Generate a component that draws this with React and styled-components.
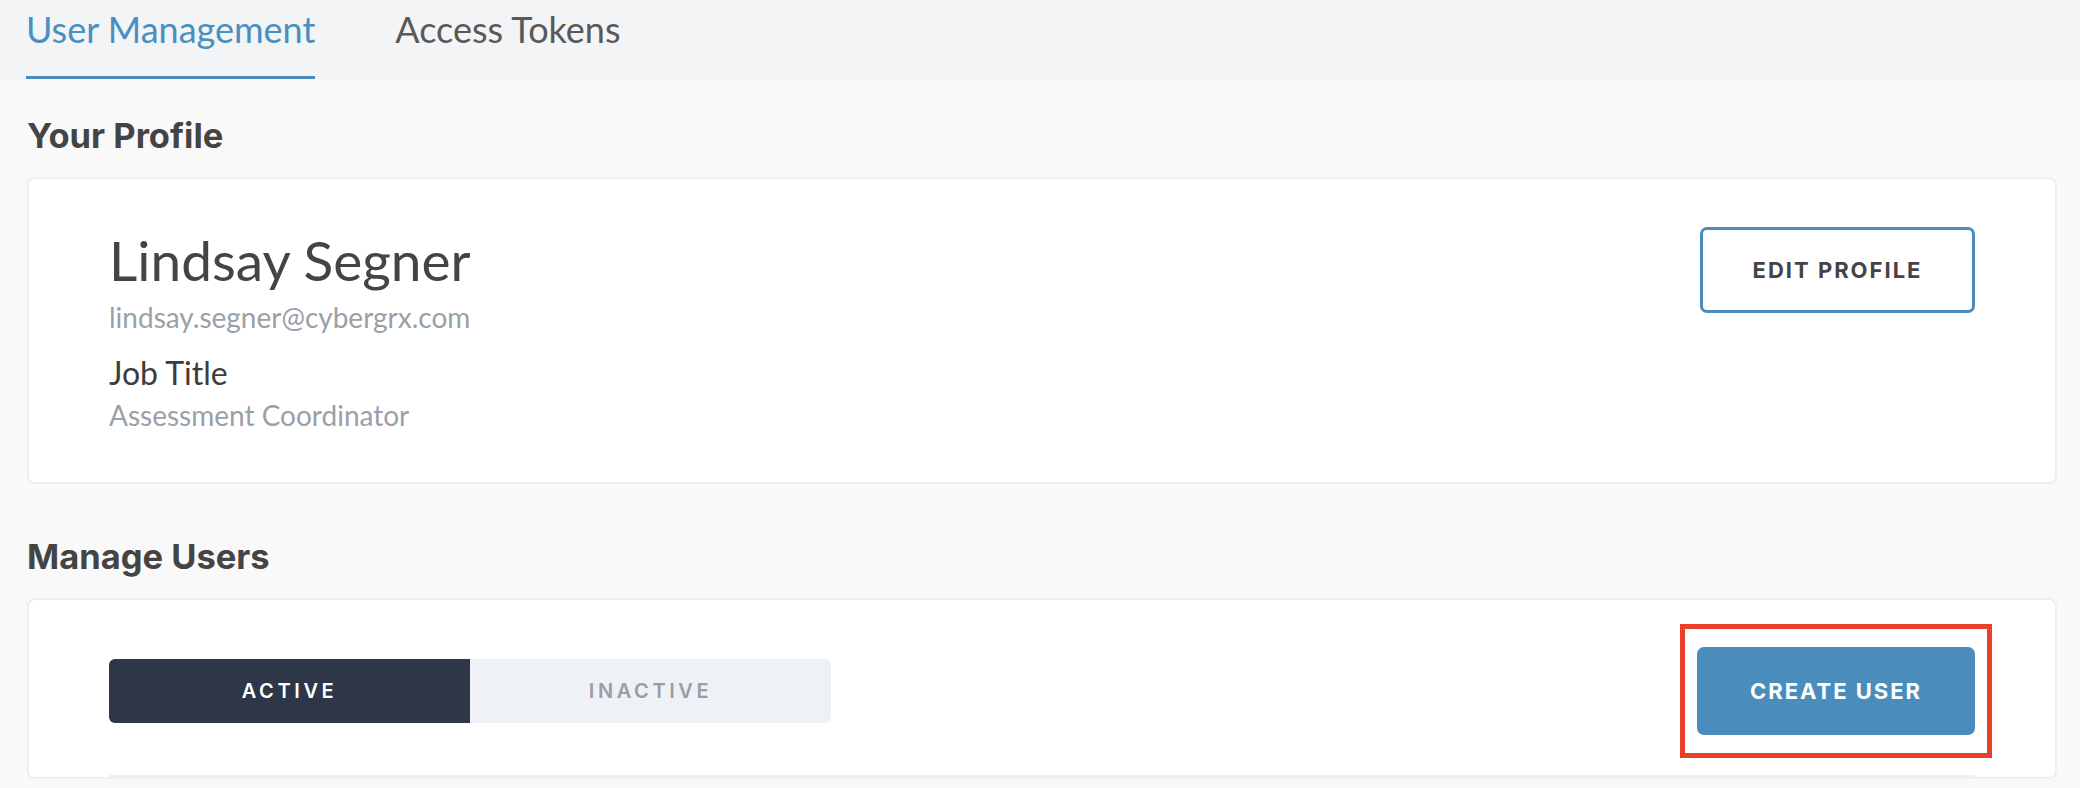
import React, { useState } from "react";
import styled, { createGlobalStyle } from "styled-components";

const GlobalStyle = createGlobalStyle`
  body {
    margin: 0;
    background: #f9f9fa;
    font-family: Lato, "Open Sans", sans-serif;
    color: #404040;
  }
  * {
    box-sizing: border-box;
  }
`;

const TabBar = styled.div`
  height: 80px;
  background: #f3f4f6;
  display: flex;
  gap: 80px;
  padding-left: 26px;
`;

const Tab = styled.div`
  height: 79px;
  padding-top: 8px;
  font-size: 36px;
  line-height: 43px;
  color: ${({ active }) => (active ? "#4a8fc1" : "#595959")};
  border-bottom: 3px solid ${({ active }) => (active ? "#4a8dbd" : "transparent")};
  cursor: pointer;
`;

const Content = styled.div`
  padding: 0 23px 0 27px;
`;

const SectionTitle = styled.h2`
  margin: ${({ first }) => (first ? "35px" : "52px")} 0 21px;
  font-family: Inter, "Noto Sans", sans-serif;
  font-size: 34.5px;
  line-height: 41px;
  font-weight: 700;
  color: #444;
`;

const Card = styled.div`
  background: #fff;
  border: 2px solid #eeeef3;
  border-radius: 8px;
  padding: ${({ tight }) => (tight ? "47px 80px 0" : "48px 80px 50px")};
`;

const ProfileRow = styled.div`
  display: flex;
  justify-content: space-between;
  align-items: flex-start;
`;

const ProfileInfo = styled.div`
  display: flex;
  flex-direction: column;
`;

const Name = styled.div`
  font-size: 55px;
  line-height: 66px;
  color: #444;
`;

const Email = styled.div`
  margin-top: 7px;
  font-size: 28px;
  line-height: 34px;
  color: #9aa0a8;
`;

const FieldLabel = styled.div`
  margin-top: 20px;
  font-size: 32px;
  line-height: 38px;
  color: #3c3c3c;
`;

const FieldValue = styled.div`
  margin-top: 6px;
  font-size: 28px;
  line-height: 34px;
  color: #9aa0a8;
`;

const OutlineButton = styled.button`
  width: 275px;
  height: 86px;
  border: 3px solid #4a8dbd;
  border-radius: 7px;
  background: #fff;
  font-family: Inter, "Noto Sans", sans-serif;
  font-size: 22px;
  font-weight: 700;
  letter-spacing: 2px;
  color: #444;
  cursor: pointer;
`;

const ManageRow = styled.div`
  display: flex;
  justify-content: space-between;
  align-items: center;
`;

const Toggle = styled.div`
  display: flex;
  width: 722px;
  height: 64px;
  border-radius: 6px;
  overflow: hidden;
  background: #eef1f5;
`;

const ToggleOption = styled.div`
  flex: 1;
  display: flex;
  align-items: center;
  justify-content: center;
  font-family: Inter, "Noto Sans", sans-serif;
  font-size: 20px;
  font-weight: 600;
  letter-spacing: 3.6px;
  background: ${({ active }) => (active ? "#2e3748" : "transparent")};
  color: ${({ active }) => (active ? "#fff" : "#9a9da3")};
  cursor: pointer;
`;

const Highlight = styled.div`
  position: relative;

  &::after {
    content: "";
    position: absolute;
    top: -23px;
    bottom: -23px;
    left: -17px;
    right: -17px;
    border: 5px solid #e8402a;
    pointer-events: none;
  }
`;

const PrimaryButton = styled.button`
  display: block;
  width: 278px;
  height: 88px;
  border: none;
  border-radius: 7px;
  background: #4a8dbd;
  font-family: Inter, "Noto Sans", sans-serif;
  font-size: 22px;
  font-weight: 700;
  letter-spacing: 2px;
  color: #fff;
  cursor: pointer;
`;

const Divider = styled.div`
  margin-top: 40px;
  height: 2px;
  background: #eeeef3;
`;

export default function App() {
  const [tab, setTab] = useState("users");
  const [status, setStatus] = useState("active");

  return (
    <>
      <GlobalStyle />
      <TabBar>
        <Tab active={tab === "users"} onClick={() => setTab("users")}>
          User Management
        </Tab>
        <Tab active={tab === "tokens"} onClick={() => setTab("tokens")}>
          Access Tokens
        </Tab>
      </TabBar>
      <Content>
        <SectionTitle first>Your Profile</SectionTitle>
        <Card>
          <ProfileRow>
            <ProfileInfo>
              <Name>Lindsay Segner</Name>
              <Email>lindsay.segner@cybergrx.com</Email>
              <FieldLabel>Job Title</FieldLabel>
              <FieldValue>Assessment Coordinator</FieldValue>
            </ProfileInfo>
            <OutlineButton>EDIT PROFILE</OutlineButton>
          </ProfileRow>
        </Card>
        <SectionTitle>Manage Users</SectionTitle>
        <Card tight>
          <ManageRow>
            <Toggle>
              <ToggleOption
                active={status === "active"}
                onClick={() => setStatus("active")}
              >
                ACTIVE
              </ToggleOption>
              <ToggleOption
                active={status === "inactive"}
                onClick={() => setStatus("inactive")}
              >
                INACTIVE
              </ToggleOption>
            </Toggle>
            <Highlight>
              <PrimaryButton>CREATE USER</PrimaryButton>
            </Highlight>
          </ManageRow>
          <Divider />
        </Card>
      </Content>
    </>
  );
}
